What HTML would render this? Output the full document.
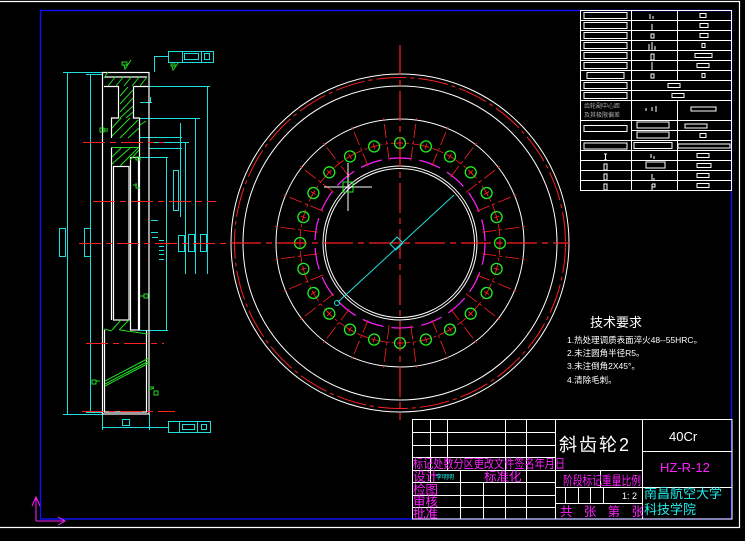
<!DOCTYPE html>
<html><head><meta charset="utf-8"><style>
html,body{margin:0;padding:0;background:#000;width:745px;height:541px;overflow:hidden}
svg{display:block}
text{font-family:"Liberation Sans","Noto Sans CJK SC",sans-serif}
</style></head><body>
<svg width="745" height="541" viewBox="0 0 745 541" xmlns="http://www.w3.org/2000/svg">
<defs>
<g id="hole"><circle cx="400" cy="143" r="5.5" fill="none" stroke="#22ee22" stroke-width="1.3"/><path d="M397 143h6M400 140v6" stroke="#ff2020" stroke-width="0.8"/></g>
<line id="rad" x1="400" y1="160" x2="400" y2="116" stroke="#ff2020" stroke-width="0.8" stroke-dasharray="14,3,3,3"/>
</defs>
<!-- frames -->
<path d="M0 1.5H739.5V527.5H0" fill="none" stroke="#fff" stroke-width="1.2"/>
<rect x="40.5" y="10.5" width="691" height="508.5" fill="none" stroke="#1010ff" stroke-width="1.4"/>
<!-- UCS icon -->
<path d="M36 521V497M32 506L36 497L40 506M36 521H65M58 517L65 521L58 525" fill="none" stroke="#ff20ff" stroke-width="1"/>

<!-- spec table -->
<g stroke="#fff" stroke-width="1" fill="none">
<rect x="580.5" y="10.5" width="151" height="180"/>
<path d="M580 20.5H731M580 30.5H731M580 40.5H731M580 50.5H731M580 60.5H731M580 70.5H731M580 80.5H731M580 90.5H731M580 100.5H731M580 120.5H731M631 130.5H731M580 140.5H731M580 150.5H731M580 160.5H731M580 170.5H731M580 180.5H731"/>
<path d="M631.5 10V190M677.5 10V80M677.5 100V190"/>
<rect x="584" y="12.5" width="43" height="6"/><rect x="584" y="22.5" width="43" height="6"/><rect x="584" y="32.5" width="43" height="6"/><rect x="584" y="42.5" width="43" height="6"/><rect x="584" y="52.5" width="43" height="6"/><rect x="584" y="62.5" width="43" height="6"/><rect x="587" y="72.5" width="37" height="6"/><rect x="584" y="82.5" width="43" height="6"/><rect x="584" y="92.5" width="43" height="6"/><rect x="584" y="125.5" width="43" height="6"/><rect x="584" y="143" width="43" height="6"/>
<rect x="700" y="13.5" width="6" height="4"/><rect x="700" y="23.5" width="8" height="4"/><rect x="700" y="33.5" width="8" height="4"/><rect x="702" y="43.5" width="3" height="4"/><rect x="695" y="53.5" width="17" height="4"/><rect x="697" y="63.5" width="12" height="4"/><rect x="702" y="73.5" width="3" height="4"/><rect x="668" y="83.5" width="12" height="4"/><rect x="672" y="93.5" width="12" height="4"/>
<rect x="691" y="107" width="25" height="4"/><rect x="637" y="122" width="32" height="6"/><rect x="685" y="124" width="22" height="4"/><rect x="637" y="132" width="32" height="6"/><rect x="700" y="133.5" width="6" height="4"/><rect x="634" y="142.5" width="38" height="6"/><rect x="678" y="144" width="52" height="4"/>
<rect x="697" y="153.5" width="12" height="4"/><rect x="646" y="162" width="19" height="6"/><rect x="697" y="163.5" width="14" height="4"/><rect x="697" y="173.5" width="12" height="4"/><rect x="697" y="183.5" width="12" height="4"/>
<path d="M650 14v5M653 16v3M652 24v6M651 34h3v4h-3zM649 44v6M652 42v8M655 46v4M651 54h3v6h-3zM652 62v8M651 74h3v4h-3zM646 108v3M652 107v4M656 106v6M604 154h3M605.5 154v6M604 160h3M604 164h3v6h-3zM604 174h3v6h-3zM604 184h3v6h-3zM651 154v4M654 156v3M652 174v6M654 178v2M652 184v6M652 184h3v3h-3"/>
</g>
<text x="584" y="108" font-size="6" fill="#aaa">齿轮副中心距</text>
<text x="584" y="117" font-size="6" fill="#aaa">及其极限偏差</text>

<!-- front view circles -->
<g fill="none">
<circle cx="400" cy="243" r="169" stroke="#fff" stroke-width="1"/>
<circle cx="400" cy="243" r="165.5" stroke="#ff2020" stroke-width="1" stroke-dasharray="30,4,4,4"/>
<circle cx="400" cy="243" r="157" stroke="#fff" stroke-width="1"/>
<circle cx="400" cy="243" r="124" stroke="#fff" stroke-width="1"/>
<circle cx="400" cy="243" r="100" stroke="#ff2020" stroke-width="0.8" stroke-dasharray="12,3,3,3"/>
<circle cx="400" cy="243" r="85" stroke="#ff20ff" stroke-width="1.2" stroke-dasharray="22,8"/>
<circle cx="400" cy="243" r="77" stroke="#fff" stroke-width="1"/>
<circle cx="400" cy="243" r="74.5" stroke="#fff" stroke-width="1"/>
</g>
<g>
<use href="#rad" transform="rotate(7.5 400 243)"/><use href="#rad" transform="rotate(22.5 400 243)"/><use href="#rad" transform="rotate(37.5 400 243)"/><use href="#rad" transform="rotate(52.5 400 243)"/><use href="#rad" transform="rotate(67.5 400 243)"/><use href="#rad" transform="rotate(82.5 400 243)"/><use href="#rad" transform="rotate(97.5 400 243)"/><use href="#rad" transform="rotate(112.5 400 243)"/><use href="#rad" transform="rotate(127.5 400 243)"/><use href="#rad" transform="rotate(142.5 400 243)"/><use href="#rad" transform="rotate(157.5 400 243)"/><use href="#rad" transform="rotate(172.5 400 243)"/><use href="#rad" transform="rotate(187.5 400 243)"/><use href="#rad" transform="rotate(202.5 400 243)"/><use href="#rad" transform="rotate(217.5 400 243)"/><use href="#rad" transform="rotate(232.5 400 243)"/><use href="#rad" transform="rotate(247.5 400 243)"/><use href="#rad" transform="rotate(262.5 400 243)"/><use href="#rad" transform="rotate(277.5 400 243)"/><use href="#rad" transform="rotate(292.5 400 243)"/><use href="#rad" transform="rotate(307.5 400 243)"/><use href="#rad" transform="rotate(322.5 400 243)"/><use href="#rad" transform="rotate(337.5 400 243)"/><use href="#rad" transform="rotate(352.5 400 243)"/>
</g>
<g>
<use href="#hole"/><use href="#hole" transform="rotate(15 400 243)"/><use href="#hole" transform="rotate(30 400 243)"/><use href="#hole" transform="rotate(45 400 243)"/><use href="#hole" transform="rotate(60 400 243)"/><use href="#hole" transform="rotate(75 400 243)"/><use href="#hole" transform="rotate(90 400 243)"/><use href="#hole" transform="rotate(105 400 243)"/><use href="#hole" transform="rotate(120 400 243)"/><use href="#hole" transform="rotate(135 400 243)"/><use href="#hole" transform="rotate(150 400 243)"/><use href="#hole" transform="rotate(165 400 243)"/><use href="#hole" transform="rotate(180 400 243)"/><use href="#hole" transform="rotate(195 400 243)"/><use href="#hole" transform="rotate(210 400 243)"/><use href="#hole" transform="rotate(225 400 243)"/><use href="#hole" transform="rotate(240 400 243)"/><use href="#hole" transform="rotate(255 400 243)"/><use href="#hole" transform="rotate(270 400 243)"/><use href="#hole" transform="rotate(285 400 243)"/><use href="#hole" transform="rotate(300 400 243)"/><use href="#hole" transform="rotate(315 400 243)"/><use href="#hole" transform="rotate(330 400 243)"/><use href="#hole" transform="rotate(345 400 243)"/>
</g>
<!-- centerlines -->
<path d="M400 45V420M231 243H570" stroke="#ff2020" stroke-width="1.2" stroke-dasharray="30,5,6,5"/>
<path d="M454 195L338 302" stroke="#22dddd" stroke-width="1"/>
<path d="M390 244l7-7 6 6-7 7z" fill="none" stroke="#22dddd" stroke-width="1"/>
<circle cx="337" cy="303" r="2.5" fill="none" stroke="#22dddd"/>
<path d="M324 187H372M348 163V211" stroke="#fff" stroke-width="1"/>
<rect x="343" y="182" width="10" height="10" fill="none" stroke="#22ee22" stroke-width="1"/>

<!-- tech requirements -->
<text x="590" y="327" font-size="13" fill="#fff">技术要求</text>
<g font-size="8.5" fill="#fff">
<text x="567" y="343">1.热处理调质表面淬火48--55HRC。</text>
<text x="567" y="356">2.未注圆角半径R5。</text>
<text x="567" y="369">3.未注倒角2X45°。</text>
<text x="567" y="383">4.清除毛刺。</text>
</g>

<!-- title block -->
<g stroke="#fff" stroke-width="1" fill="none">
<rect x="412.5" y="419.5" width="319.5" height="99.5"/>
<path d="M555.5 419V519M642.5 419V519"/>
<path d="M412 432.5H555M412 445.5H555M412 457.5H555M412 470.5H555M412 482.5H555M412 495.5H555M412 507.5H555"/>
<path d="M430.5 419V470M447.5 419V470M505.5 419V519M526.5 419V519M460.5 470V519M483.5 482V519M430.5 470V482"/>
<path d="M555 470.5H642M555 487.5H642M555 503.5H642M600.5 470V487M565.5 487V503M578.5 487V503M590.5 487V503M603.5 487V503"/>
<path d="M642 451.5H732M642 487.5H732"/>
</g>
<text x="559" y="451" font-size="18" fill="#fff" letter-spacing="2" font-family="Liberation Serif,Noto Serif CJK SC,serif">斜齿轮2</text>
<text x="669" y="441" font-size="13" fill="#fff" font-family="Liberation Serif,serif">40Cr</text>
<text x="660" y="472" font-size="13" fill="#ff20ff" font-family="Liberation Serif,serif">HZ-R-12</text>
<text x="644" y="498" font-size="13" fill="#22eeee">南昌航空大学</text>
<text x="644" y="514" font-size="13" fill="#22eeee">科技学院</text>
<g font-size="12.5" fill="#ff20ff">
<text x="413" y="468" textLength="152" lengthAdjust="spacingAndGlyphs">标记处数分区更改文件签名年月日</text>
<text x="413" y="481">设计</text>
<text x="484" y="481">标准化</text>
<text x="413" y="494">检图</text>
<text x="413" y="506">审核</text>
<text x="413" y="518">批准</text>
<text x="563" y="485" textLength="78" lengthAdjust="spacingAndGlyphs">阶段标记重量比例</text>
<text x="560" y="516" textLength="84" lengthAdjust="spacing">共  张 第  张</text>
</g>
<text x="436" y="479" font-size="6" fill="#22eeee">李明明</text>
<text x="622" y="499" font-size="9" fill="#fff">1: 2</text>

<!-- side view -->
<g fill="none" stroke="#22dddd" stroke-width="1">
<path d="M67.5 72V414M63 72.5H120M63 414.5H102M90.5 74V412M86 74.5H102M86 412.5H102"/>
<path d="M148 86.5H210M207.5 86V274M139 118.5H200M195.5 118V274M139 137.5H182M180.5 123V217M149 142.5H189M185.5 142V274M149 148.5H182M139 157.5H168M166.5 157V330M139 330.5H168"/>
<rect x="59.5" y="228.5" width="6" height="28"/><rect x="84.5" y="228.5" width="6" height="28"/><rect x="173.5" y="170.5" width="5" height="40"/><rect x="178.5" y="235.5" width="6" height="16"/><rect x="188.5" y="234.5" width="6" height="17"/><rect x="200.5" y="234.5" width="6" height="17"/>
<rect x="168.5" y="51.5" width="45" height="11"/><path d="M182.5 51V62M201.5 51V62M154 56.5H168M154.5 56V72"/><rect x="184.5" y="53.5" width="14" height="6"/><rect x="204.5" y="53.5" width="5" height="6"/>
<rect x="168.5" y="421.5" width="42" height="11"/><path d="M179.5 421V432M197.5 421V432M102 427.5H168M102.5 414V430M149.5 414V430"/><rect x="182.5" y="424.5" width="12" height="5"/><rect x="201.5" y="424.5" width="5" height="5"/><rect x="122.5" y="419.5" width="7" height="6"/>
<path d="M140 102.5H152M150.5 97V102"/>
<path d="M151 220.5H158M151 232.5H158M152 237.5H158M159 240.5H164M159 246.5H164M159 250.5H164M159 254.5H164M159 259.5H164"/>
</g>
<g fill="none" stroke="#fff" stroke-width="1.2">
<rect x="102.5" y="72.5" width="46.5" height="341.5"/>
<path d="M104.5 77H147M104 86.5H118.5V118H111.5V138M133.5 86.5H148M133.5 86.5V118H139.5V157M111.5 148V320M139.5 157V330"/>
<rect x="113.5" y="166.5" width="15.5" height="153.5"/>
<rect x="130.5" y="157.5" width="8" height="172.5"/>
<path d="M104.5 330V412H146.5V330"/>
</g>
<g fill="none" stroke="#22dd22" stroke-width="1">
<path d="M104 78L108 72M108 86L116 76M116 86L124 76M124 86L132 76M132 86L140 76M140 86L147 77M120 96L128 87M120 104L133 90M120 112L133 98M120 118L133 106M126 118L133 112M112 128L121 118M112 136L130 118M120 138L138 120M128 138L139 128M112 157L121 148M112 164L130 148M120 166L138 148M130 160L139 150M112 330L121 320M119 330L129 320"/>
<path d="M111 147.5H139M104 329L112 331M120 330L148 334"/>
<path d="M105 381L149 358M105 384L149 361M105 386L149 363"/>
<path d="M122 62h5v3h-5zM124 65l1 4 6-9M171 64h4v2h-4zM172 66l1 4 6-8M100 128h4v4h-4zM104 129h4M104 131h4M140 125l6-4M136 157h4v3h-4zM133 185h4M136 183v5h4M144 294h4v4h-4zM140 296h4M92 380h4v4h-4zM96 381h4M154 391h4v4h-4zM150 387h4M148 390l6-2"/>
</g>
<g stroke="#ff2020" stroke-width="1.1" stroke-dasharray="22,5,6,5">
<path d="M83 142.5H164M93 201.5H216M79 243.5H230M86 343.5H164M82 411.5H175"/>
</g>
</svg>
</body></html>
